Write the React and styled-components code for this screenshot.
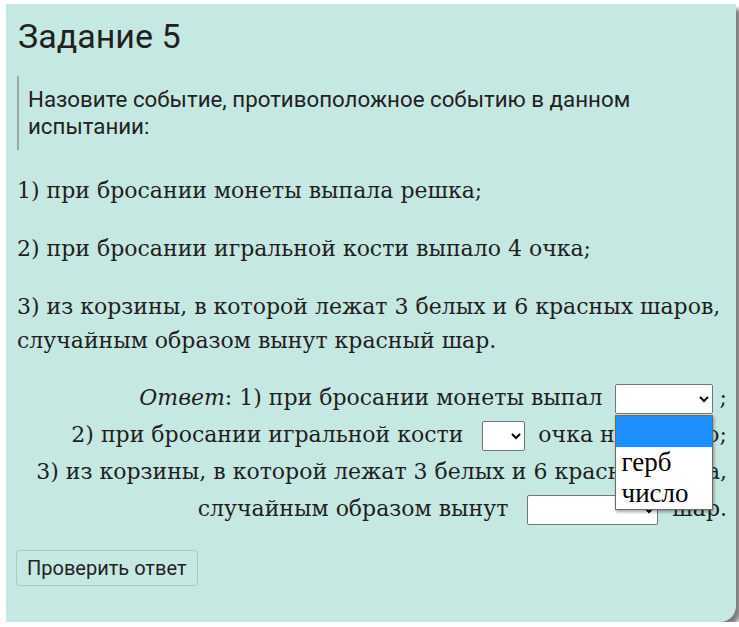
import React from 'react';
import styled, { createGlobalStyle } from 'styled-components';

const Global = createGlobalStyle`
  body {
    margin: 0;
    background: #ffffff;
  }
`

const Page = styled.div`
  padding: 4px 0 0 6px;
`

const Card = styled.div`
  box-sizing: border-box;
  width: 730px;
  height: 618px;
  padding: 10px 9px 10px 10px;
  background: #c6e8e2;
  border-radius: 0 0 16px 0;
  box-shadow: 5px 5px 4px #7d7d7d;
`

const Title = styled.h2`
  margin: 0 0 0 2px;
  font-family: Roboto, sans-serif;
  font-weight: 400;
  font-size: 34px;
  line-height: 44px;
  color: #212121;
`

const Quote = styled.blockquote`
  max-width: 640px;
  margin: 18px 0 0 1px;
  padding: 10px 0 10px 9px;
  border-left: 2px solid #9aa8a6;
  font-family: Roboto, sans-serif;
  font-size: 22.3px;
  line-height: 27px;
  color: #222;
`

const Para = styled.p`
  margin: 24px 0 0 1px;
  font-family: "DejaVu Serif", serif;
  font-size: 22px;
  line-height: 34px;
  color: #1f1f1f;
`

const Answer = styled.div`
  margin: 21px 0 0 0;
  text-align: right;
  font-family: "DejaVu Serif", serif;
  font-size: 22px;
  line-height: 37px;
  color: #1f1f1f;
`

const Em = styled.i`
  font-style: italic;
`

// holds the first select and its opened option list
const Anchor = styled.span`
  position: relative;
  display: inline-block;
  vertical-align: middle;
  line-height: 0;
`

const Choice = styled.select`
  box-sizing: border-box;
  width: ${p => p.$w}px;
  height: 30px;
  margin: 0 ${p => p.$mr}px 0 ${p => p.$ml}px;
  vertical-align: middle;
  background: #fff;
  border: 1px solid #767676;
  border-radius: 2px;
  font-family: "Liberation Serif", serif;
  font-size: 16px;
`

const ListBox = styled.div`
  position: absolute;
  left: ${p => p.$left}px;
  top: 31px;
  width: 98px;
  box-sizing: border-box;
  background: #fff;
  border: 1px solid #6b6b6b;
  box-shadow: 1px 2px 3px rgba(0, 0, 0, 0.35);
  text-align: left;
  z-index: 2;
`

const Option = styled.div`
  height: 31px;
  padding-left: 6px;
  font-family: "Liberation Serif", serif;
  font-size: 27px;
  line-height: 31px;
  color: #000;
  background: ${p => (p.$active ? '#1e90ff' : '#fff')};
`

const Check = styled.button`
  margin: 23px 0 0 0;
  padding: 6px 10px;
  background: transparent;
  border: 1px solid #a9c9c4;
  border-radius: 4px;
  font-family: Roboto, sans-serif;
  font-size: 20px;
  line-height: 22px;
  color: #222;
`

export default function App() {
  return (
    <Page>
      <Global />
      <Card>
        <Title>Задание 5</Title>
        <Quote>Назовите событие, противоположное событию в данном испытании:</Quote>
        <Para>1) при бросании монеты выпала решка;</Para>
        <Para>2) при бросании игральной кости выпало 4 очка;</Para>
        <Para>
          3) из корзины, в которой лежат 3 белых и 6 красных шаров, случайным образом вынут красный шар.
        </Para>
        <Answer>
          <Em>Ответ</Em>: 1) при бросании монеты выпал
          <Anchor>
            <Choice $w={98} $ml={12} $mr={7} defaultValue="">
              <option value=""></option>
              <option>герб</option>
              <option>число</option>
            </Choice>
            <ListBox $left={12}>
              <Option $active />
              <Option>герб</Option>
              <Option>число</Option>
            </ListBox>
          </Anchor>
          ;<br />
          2) при бросании игральной кости
          <Choice $w={43} $ml={19} $mr={13} defaultValue="">
            <option value=""></option>
            <option>1</option>
            <option>2</option>
            <option>3</option>
            <option>4</option>
            <option>5</option>
            <option>6</option>
          </Choice>
          очка не выпало;<br />
          3) из корзины, в которой лежат 3 белых и 6 красных шара,<br />
          случайным образом вынут
          <Choice $w={131} $ml={19} $mr={14} defaultValue="">
            <option value=""></option>
            <option>белый</option>
            <option>красный</option>
          </Choice>
          шар.
        </Answer>
        <Check>Проверить ответ</Check>
      </Card>
    </Page>
  );
}
